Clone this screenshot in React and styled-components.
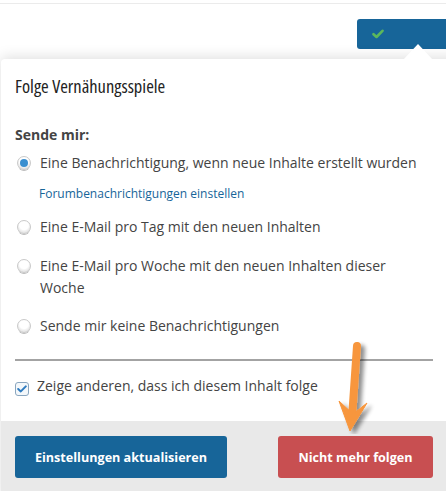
import React, { useState } from 'react';
import styled, { createGlobalStyle } from 'styled-components';

const GlobalStyle = createGlobalStyle`
  html, body {
    margin: 0;
    padding: 0;
    background: #ffffff;
  }
  body {
    font-family: "Open Sans", "Liberation Sans", sans-serif;
    color: #333;
  }
`;

const Page = styled.div`
  position: relative;
  width: 446px;
  height: 491px;
  overflow: hidden;
  background: #fff;
  border-top: 1px solid #ebebeb;
  margin-top: 3px;
`;

const TopBar = styled.div`
  display: flex;
  justify-content: flex-end;
  height: 55px;
  padding-top: 15px;
  box-sizing: border-box;
`;

const FollowButton = styled.button`
  width: 100px;
  height: 30px;
  margin-right: -11px;
  background: #176599;
  border: none;
  border-radius: 3px;
  display: flex;
  align-items: center;
  padding: 0 0 0 15px;
  cursor: pointer;
`;

const Panel = styled.div`
  position: relative;
  margin-left: 1px;
  width: 460px;
  background: #fff;
  border-radius: 4px 4px 0 0;
  box-shadow: 0 -2px 14px rgba(0, 0, 0, 0.13);

  &::before {
    content: '';
    position: absolute;
    top: -15px;
    left: 402px;
    border-left: 15px solid transparent;
    border-right: 15px solid transparent;
    border-bottom: 16px solid #fff;
  }
`;

const Body = styled.div`
  padding: 15px 0 0 14px;
  width: 418px;
`;

const Title = styled.h2`
  margin: 0 0 27px;
  font-family: "Open Sans", sans-serif;
  font-stretch: 75%;
  font-weight: 400;
  font-size: 18.5px;
  line-height: 24px;
  color: #222;
`;

const Label = styled.div`
  font-weight: 700;
  font-size: 14px;
  line-height: 20px;
  color: #444;
  margin-bottom: 7px;
`;

const Option = styled.label`
  display: flex;
  align-items: flex-start;
  gap: 9px;
  font-size: 14px;
  line-height: 22px;
  color: #444;
  margin-bottom: ${(p) => p.$gap}px;
  cursor: pointer;
`;

const RadioDot = styled.span`
  flex: none;
  width: 12px;
  height: 12px;
  margin: 4px 0 0 2px;
  border-radius: 50%;
  background: radial-gradient(circle at 50% 35%, #fff 0 45%, #f0f0f0 60%, #d6d6d6 100%);
  border: 1px solid #c9c9c9;
  box-shadow: 0 2px 0 -1px #bbb;
  position: relative;

  &::after {
    content: '';
    display: ${(p) => (p.$checked ? 'block' : 'none')};
    position: absolute;
    left: 2px;
    top: 2px;
    width: 8px;
    height: 8px;
    border-radius: 50%;
    background: #3a8fd0;
  }
`;

const SubLink = styled.a`
  display: block;
  margin: 0 0 12px 24px;
  font-size: 12px;
  line-height: 20px;
  color: #176599;
  text-decoration: none;
`;

const Divider = styled.div`
  height: 2px;
  margin: 22px 0 15px;
  background: #a3a3a3;
`;

const CheckRow = styled.label`
  display: flex;
  align-items: flex-start;
  gap: 8px;
  font-size: 14px;
  line-height: 20px;
  color: #444;
  padding-bottom: 25px;
`;

const CheckBox = styled.span`
  flex: none;
  width: 12px;
  height: 12px;
  margin-top: 6px;
  border: 1px solid #8aa6bf;
  border-radius: 3px;
  background: #f4f8fb;
  display: flex;
  align-items: center;
  justify-content: center;
`;

const Footer = styled.div`
  display: flex;
  justify-content: space-between;
  background: #e9e9e9;
  padding: 15px 0 20px 14px;
  width: 418px;
  padding-right: 28px;
`;

const ActionButton = styled.button`
  width: ${(p) => p.$width}px;
  height: 42px;
  padding: 0;
  border: none;
  border-radius: 3px;
  background: ${(p) => p.$bg};
  color: #fff;
  font-family: "Open Sans", sans-serif;
  font-weight: 700;
  font-size: 12.6px;
  cursor: pointer;
`;

const Pointer = styled.svg`
  position: absolute;
  left: 330px;
  top: 330px;
  pointer-events: none;
`;

const options = [
  { id: 'instant', text: 'Eine Benachrichtigung, wenn neue Inhalte erstellt wurden', gap: 10 },
  { id: 'daily', text: 'Eine E-Mail pro Tag mit den neuen Inhalten', gap: 17 },
  { id: 'weekly', text: 'Eine E-Mail pro Woche mit den neuen Inhalten dieser Woche', gap: 16 },
  { id: 'none', text: 'Sende mir keine Benachrichtigungen', gap: 0 },
];

const App = () => {
  const [selected, setSelected] = useState('instant');
  const [visible, setVisible] = useState(true);

  return (
    <>
      <GlobalStyle />
      <Page>
        <TopBar>
          <FollowButton>
            <svg width="12" height="10" viewBox="0 0 12 10">
              <path d="M1.5 5.2 L4.5 8 L10.5 1.8" fill="none" stroke="#5cb85c" strokeWidth="2.6" strokeLinecap="round" strokeLinejoin="round" />
            </svg>
          </FollowButton>
        </TopBar>

        <Panel>
          <Body>
            <Title>Folge Vernähungsspiele</Title>
            <Label>Sende mir:</Label>
            {options.map((o) => (
              <React.Fragment key={o.id}>
                <Option $gap={o.gap} onClick={() => setSelected(o.id)}>
                  <RadioDot $checked={selected === o.id} />
                  <span>{o.text}</span>
                </Option>
                {o.id === 'instant' && (
                  <SubLink href="#">Forumbenachrichtigungen einstellen</SubLink>
                )}
              </React.Fragment>
            ))}
            <Divider />
            <CheckRow onClick={() => setVisible(!visible)}>
              <CheckBox>
                {visible && (
                  <svg width="10" height="8" viewBox="0 0 10 8">
                    <path d="M1.2 4 L3.8 6.4 L8.8 1.4" fill="none" stroke="#2f7cc0" strokeWidth="2" strokeLinecap="round" strokeLinejoin="round" />
                  </svg>
                )}
              </CheckBox>
              <span>Zeige anderen, dass ich diesem Inhalt folge</span>
            </CheckRow>
          </Body>
          <Footer>
            <ActionButton $bg="#176599" $width={212}>Einstellungen aktualisieren</ActionButton>
            <ActionButton $bg="#c84f51" $width={155}>Nicht mehr folgen</ActionButton>
          </Footer>
        </Panel>

        <Pointer width="50" height="100" viewBox="0 0 50 100">
          <defs>
            <filter id="arrowShadow" x="-50%" y="-20%" width="200%" height="150%">
              <feGaussianBlur in="SourceAlpha" stdDeviation="2" />
              <feOffset dx="4" dy="3" result="blur" />
              <feComponentTransfer>
                <feFuncA type="linear" slope="0.45" />
              </feComponentTransfer>
              <feMerge>
                <feMergeNode />
                <feMergeNode in="SourceGraphic" />
              </feMerge>
            </filter>
          </defs>
          <g filter="url(#arrowShadow)" fill="#f7963d" stroke="#f7963d">
            <path d="M27 12 L22 84" strokeWidth="8" strokeLinecap="round" fill="none" />
            <path d="M9 67 L20 97 L37 69 L23 80 Z" strokeWidth="1" strokeLinejoin="round" />
          </g>
        </Pointer>
      </Page>
    </>
  );
};

export default App;
